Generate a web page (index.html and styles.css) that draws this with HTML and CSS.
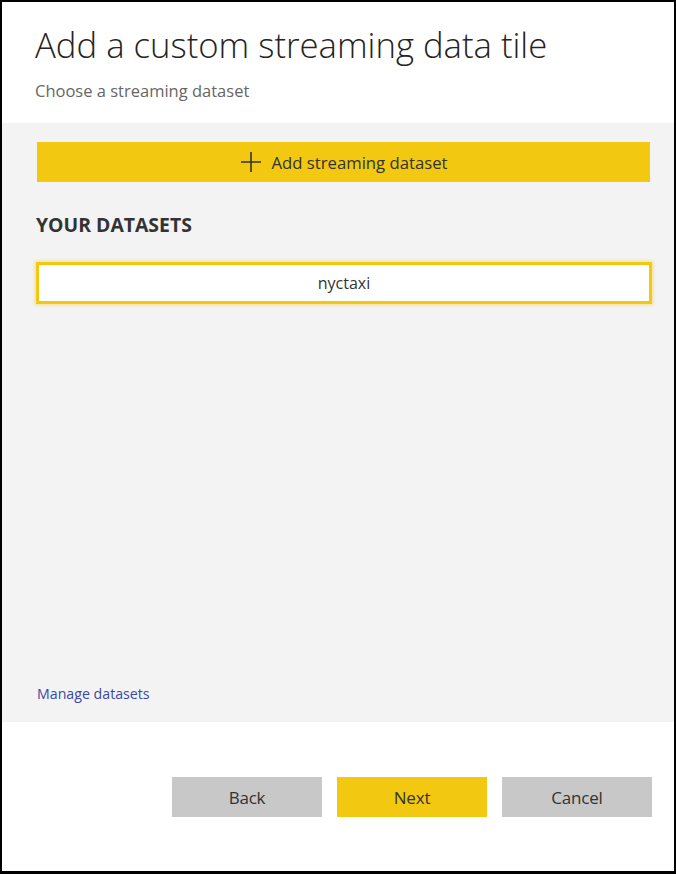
FILE: index.html
```html
<!DOCTYPE html>
<html lang="en">
<head>
<meta charset="utf-8">
<title>Add a custom streaming data tile</title>
<link rel="stylesheet" href="styles.css">
</head>
<body>
<div class="frame">
  <header class="header">
    <h1 class="title">Add a custom streaming data tile</h1>
    <p class="subtitle">Choose a streaming dataset</p>
  </header>
  <section class="panel">
    <button class="add-btn" type="button">
      <svg class="plus" width="22" height="22" viewBox="0 0 22 22" aria-hidden="true"><path d="M11 1V21M1 11H21" stroke="#333" stroke-width="1.6" fill="none"/></svg>
      <span>Add streaming dataset</span>
    </button>
    <h2 class="section-title">YOUR DATASETS</h2>
    <div class="dataset">nyctaxi</div>
    <a class="manage" href="#">Manage datasets</a>
  </section>
  <footer class="footer">
    <button class="btn btn-gray" type="button">Back</button>
    <button class="btn btn-yellow" type="button">Next</button>
    <button class="btn btn-gray" type="button">Cancel</button>
  </footer>
</div>
</body>
</html>
```
FILE: styles.css
```css
html, body {
  margin: 0;
  padding: 0;
  background: #fff;
}
.frame {
  width: 676px;
  height: 874px;
  box-sizing: border-box;
  border-style: solid;
  border-color: #000;
  border-width: 2px 2px 3px 2px;
  display: flex;
  flex-direction: column;
  font-family: "Open Sans", "Noto Sans", sans-serif;
  color: #333;
}
.header {
  height: 121px;
  box-sizing: border-box;
  padding: 23px 0 0 33px;
}
.title {
  margin: 0;
  font-weight: 300;
  font-size: 34.7px;
  line-height: 40px;
  color: #252423;
}
.subtitle {
  margin: 16px 0 0 0;
  font-size: 16.5px;
  line-height: 20px;
  color: #666;
}
.panel {
  height: 599px;
  background: #f3f3f3;
  box-sizing: border-box;
  padding: 19px 0 18px 0;
  display: flex;
  flex-direction: column;
}
.add-btn {
  margin: 0 24px 0 35px;
  height: 40px;
  border: none;
  background: #f2c811;
  display: flex;
  align-items: center;
  justify-content: center;
  gap: 10px;
  font-family: inherit;
  font-size: 16.7px;
  color: #333;
  padding: 0;
}
.plus {
  display: block;
}
.section-title {
  margin: 31px 0 0 34px;
  font-size: 19.4px;
  line-height: 24px;
  font-weight: 700;
  color: #333;
}
.dataset {
  margin: 25px 22px 0 34px;
  height: 42px;
  box-sizing: border-box;
  border: 3px solid #f2c811;
  background: #fff;
  box-shadow: 0 0 3px 1px rgba(242, 200, 17, 0.45);
  display: flex;
  align-items: center;
  justify-content: center;
  font-size: 16px;
  color: #333;
}
.manage {
  margin: auto 0 0 35px;
  font-size: 14.2px;
  line-height: 20px;
  color: #3a49a7;
  text-decoration: none;
  align-self: flex-start;
}
.footer {
  flex: 1;
  display: flex;
  justify-content: flex-end;
  align-items: flex-start;
  gap: 15px;
  padding: 55px 22px 0 0;
}
.btn {
  width: 150px;
  height: 40px;
  border: none;
  font-family: inherit;
  font-size: 17px;
  color: #333;
  letter-spacing: -0.2px;
}
.btn-gray {
  background: #c8c8c8;
}
.btn-yellow {
  background: #f2c811;
}
```
